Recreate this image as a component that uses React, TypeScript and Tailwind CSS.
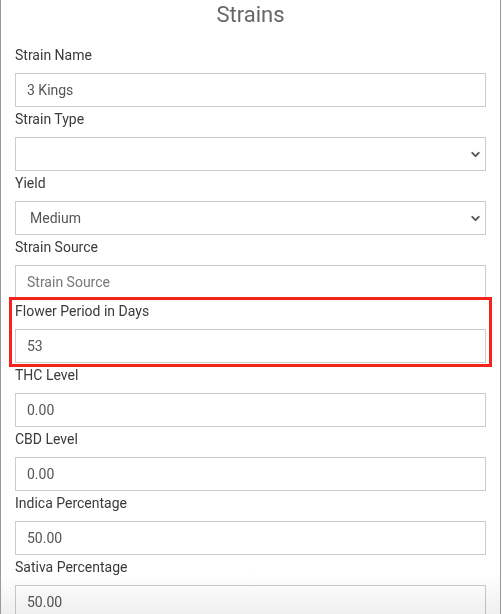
import { ChevronDown } from "lucide-react";

type Field = {
  label: string;
  value?: string;
  placeholder?: string;
  select?: boolean;
  highlight?: boolean;
};

const fields: Field[] = [
  { label: "Strain Name", value: "3 Kings" },
  { label: "Strain Type", value: "", select: true },
  { label: "Yield", value: "Medium", select: true },
  { label: "Strain Source", placeholder: "Strain Source" },
  { label: "Flower Period in Days", value: "53", highlight: true },
  { label: "THC Level", value: "0.00" },
  { label: "CBD Level", value: "0.00" },
  { label: "Indica Percentage", value: "50.00" },
  { label: "Sativa Percentage", value: "50.00" },
];

function FormField({ field }: { field: Field }) {
  return (
    <div className="relative">
      {field.highlight && (
        <div className="pointer-events-none absolute left-[-6px] right-[-6px] top-[-2px] bottom-[-4px] border-[3px] border-[#f5221e]" />
      )}
      <label className="block pt-[2px] mb-[8px] text-[14px] leading-[20px] text-[#3a3a3a]">
        {field.label}
      </label>
      {field.select ? (
        <div className="flex h-[34px] items-center justify-between border border-[#ccc] bg-white pl-[14px] pr-[3px] text-[14px] text-[#555]">
          <span>{field.value}</span>
          <ChevronDown size={13} strokeWidth={3.5} className="text-[#555]" />
        </div>
      ) : (
        <div className="flex h-[34px] items-center border border-[#ccc] bg-white px-[11px] text-[14px]">
          {field.value ? (
            <span className="text-[#555]">{field.value}</span>
          ) : (
            <span className="text-[#777]">{field.placeholder}</span>
          )}
        </div>
      )}
    </div>
  );
}

export default function App() {
  return (
    <div
      className="relative h-[614px] w-[502px] overflow-hidden bg-white"
      style={{ fontFamily: "Roboto, 'Liberation Sans', sans-serif" }}
    >
      <div className="h-full w-[501px] border-l border-r border-[#9a9a9a]">
        <h1 className="pt-[1px] text-center text-[22px] leading-[28px] text-[#666]">
          Strains
        </h1>
        <div className="flex flex-col px-[14px] pt-[14px]">
          {fields.map((f) => (
            <FormField key={f.label} field={f} />
          ))}
        </div>
      </div>
      <div className="pointer-events-none absolute bottom-0 left-[1px] right-[2px] h-[40px] bg-gradient-to-b from-white to-[#efefef] mix-blend-multiply" />
    </div>
  );
}
